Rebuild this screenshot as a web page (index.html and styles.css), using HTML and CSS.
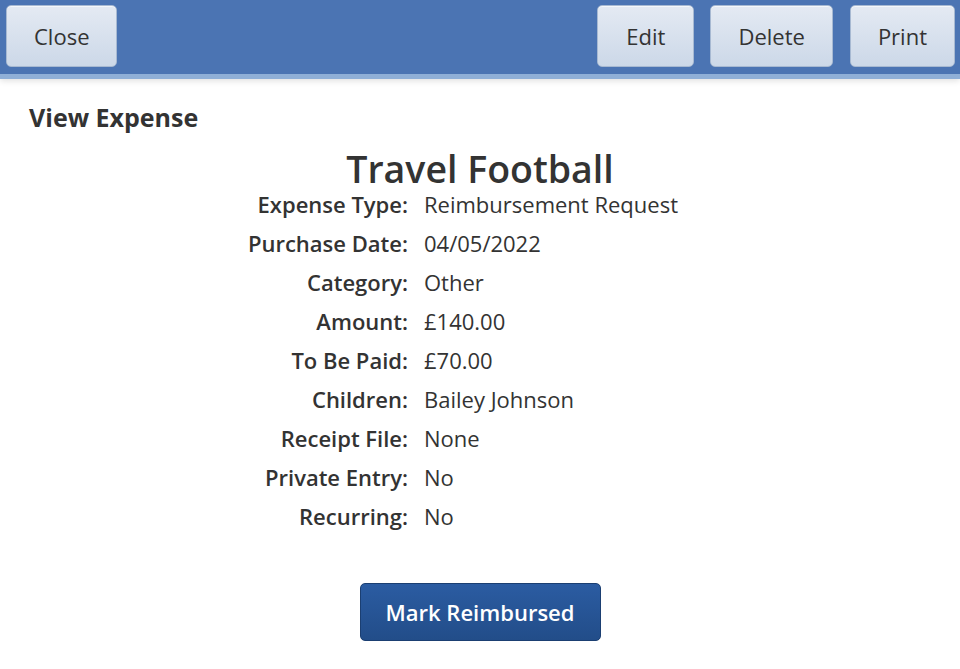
FILE: index.html
```html
<!DOCTYPE html>
<html lang="en">
<head>
  <meta charset="UTF-8">
  <title>View Expense</title>
  <link rel="stylesheet" href="styles.css">
</head>
<body>
  <div class="topbar">
    <button class="btn">Close</button>
    <div class="spacer"></div>
    <button class="btn btn-edit">Edit</button>
    <button class="btn btn-delete">Delete</button>
    <button class="btn btn-print">Print</button>
  </div>

  <div class="content">
    <h3 class="page-title">View Expense</h3>
    <h1 class="expense-name">Travel Football</h1>

    <div class="details">
      <div class="label">Expense Type:</div><div class="value">Reimbursement Request</div>
      <div class="label">Purchase Date:</div><div class="value">04/05/2022</div>
      <div class="label">Category:</div><div class="value">Other</div>
      <div class="label">Amount:</div><div class="value">£140.00</div>
      <div class="label">To Be Paid:</div><div class="value">£70.00</div>
      <div class="label">Children:</div><div class="value">Bailey Johnson</div>
      <div class="label">Receipt File:</div><div class="value">None</div>
      <div class="label">Private Entry:</div><div class="value">No</div>
      <div class="label">Recurring:</div><div class="value">No</div>
    </div>

    <div class="actions">
      <button class="btn-primary">Mark Reimbursed</button>
    </div>
  </div>
</body>
</html>
```

FILE: styles.css
```css
body {
  margin: 0;
  font-family: "Open Sans", sans-serif;
  color: #333;
  background: #fff;
}
.topbar {
  display: flex;
  align-items: flex-start;
  height: 79px;
  padding: 5px 5px 0 6px;
  box-sizing: border-box;
  background: #4b74b3;
  border-bottom: 5px solid #8fafd7;
  box-shadow: 0 2px 6px rgba(0, 0, 0, 0.12);
}
.spacer {
  flex: 1;
}
.btn {
  height: 62px;
  padding: 0 27px;
  font-family: "Open Sans", sans-serif;
  font-size: 22px;
  color: #333;
  background: linear-gradient(#e4eaf3, #ccd8e8);
  border: 1px solid #a7b9d2;
  border-radius: 5px;
  box-shadow: inset 0 1px 0 rgba(255, 255, 255, 0.6);
  cursor: pointer;
}
.btn-edit {
  padding: 0 28px;
  margin-right: 16px;
}
.btn-delete {
  margin-right: 17px;
}
.content {
  padding: 21px 0 0;
}
.page-title {
  margin: 0 0 0 29px;
  font-size: 25px;
  font-weight: 700;
}
.expense-name {
  margin: 15px 0 0;
  text-align: center;
  font-size: 37.5px;
  font-weight: 600;
  line-height: 40px;
}
.details {
  display: grid;
  grid-template-columns: 408px 1fr;
  column-gap: 16px;
  row-gap: 8px;
  font-size: 22px;
  line-height: 31px;
}
.label {
  text-align: right;
  font-weight: 600;
}
.actions {
  display: flex;
  justify-content: center;
  margin-top: 51px;
}
.btn-primary {
  width: 241px;
  height: 58px;
  font-family: "Open Sans", sans-serif;
  font-size: 22px;
  font-weight: 600;
  color: #fff;
  background: linear-gradient(#2b5ca2, #224d89);
  border: 1px solid #1b3f72;
  border-radius: 5px;
  cursor: pointer;
}
```
